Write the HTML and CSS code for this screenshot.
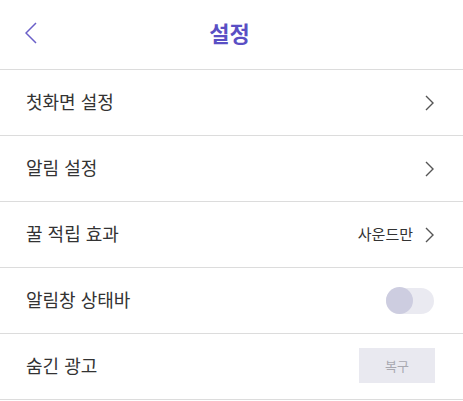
FILE: index.html
```html
<!DOCTYPE html>
<html lang="ko">
<head>
    <meta charset="UTF-8">
    <meta name="viewport" content="width=device-width, initial-scale=1.0">
    <title>설정</title>
    <link rel="stylesheet" href="styles.css">
</head>
<body>

    <div class="header">
        <button class="back-btn" aria-label="뒤로">
            <svg width="12" height="22" viewBox="0 0 12 22">
                <polyline points="11,1 1,11 11,21" fill="none" stroke="#6a5fc8" stroke-width="1.5"/>
            </svg>
        </button>
        <h1 class="title">설정</h1>
    </div>

    <ul class="settings-list">
        <li class="setting-row">
            <span class="label">첫화면 설정</span>
            <svg class="chevron" width="9" height="16" viewBox="0 0 9 16">
                <polyline points="1,1 8,8 1,15" fill="none" stroke="#555" stroke-width="1.4"/>
            </svg>
        </li>
        <li class="setting-row">
            <span class="label">알림 설정</span>
            <svg class="chevron" width="9" height="16" viewBox="0 0 9 16">
                <polyline points="1,1 8,8 1,15" fill="none" stroke="#555" stroke-width="1.4"/>
            </svg>
        </li>
        <li class="setting-row">
            <span class="label">꿀 적립 효과</span>
            <div class="value-wrap">
                <span class="value">사운드만</span>
                <svg class="chevron" width="9" height="16" viewBox="0 0 9 16">
                    <polyline points="1,1 8,8 1,15" fill="none" stroke="#555" stroke-width="1.4"/>
                </svg>
            </div>
        </li>
        <li class="setting-row">
            <span class="label">알림창 상태바</span>
            <div class="toggle">
                <div class="knob"></div>
            </div>
        </li>
        <li class="setting-row">
            <span class="label">숨긴 광고</span>
            <button class="restore-btn">복구</button>
        </li>
    </ul>

</body>
</html>
```

FILE: styles.css
```css
* {
    margin: 0;
    padding: 0;
    box-sizing: border-box;
}

body {
    font-family: "Noto Sans CJK KR", "Noto Sans", sans-serif;
    background-color: #fff;
    color: #333;
}

.header {
    position: relative;
    height: 70px;
    border-bottom: 1px solid #dcdcdc;
    display: flex;
    align-items: center;
    justify-content: center;
}

.back-btn {
    position: absolute;
    left: 25px;
    top: 22px;
    background: none;
    border: none;
    display: flex;
}

.title {
    font-size: 22px;
    font-weight: 700;
    color: #5a4fc4;
    margin-top: -5px;
    margin-right: 4px;
}

.settings-list {
    list-style: none;
}

.setting-row {
    height: 66px;
    border-bottom: 1px solid #dcdcdc;
    display: flex;
    align-items: center;
    justify-content: space-between;
    padding: 0 29px 0 26px;
}

.label {
    font-size: 18px;
    color: #333;
    margin-top: -3px;
}

.chevron {
    display: block;
}

.value-wrap {
    display: flex;
    align-items: center;
    gap: 12px;
}

.value {
    font-size: 15px;
    color: #333;
    margin-top: -2px;
}

.toggle {
    width: 48px;
    height: 26px;
    border-radius: 13px;
    background-color: #eaeaf1;
    display: flex;
    align-items: center;
}

.knob {
    width: 27px;
    height: 27px;
    border-radius: 50%;
    background-color: #cdcde0;
}

.restore-btn {
    width: 76px;
    height: 35px;
    border: none;
    background-color: #e9e9f0;
    color: #a8a8b0;
    font-family: inherit;
    font-size: 13px;
    margin-right: -1px;
    margin-top: -2px;
}
```
